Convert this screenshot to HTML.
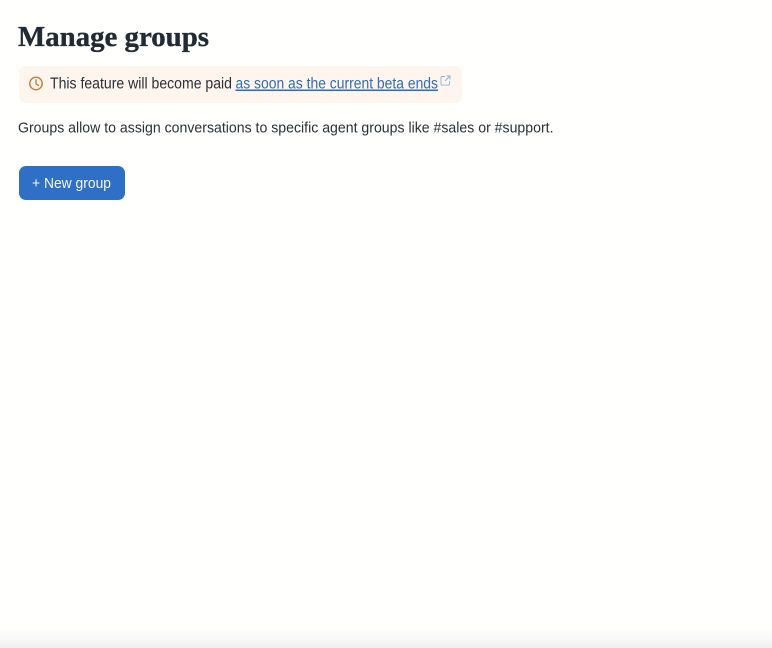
<!DOCTYPE html>
<html lang="en">
<head>
<meta charset="utf-8">
<title>Manage groups</title>
<style>
html,body{margin:0;padding:0;width:772px;height:648px;overflow:hidden;background:#fffffd}
body{position:relative;font-family:"Liberation Sans",sans-serif}
.bottom{position:absolute;left:0;top:628px;width:772px;height:20px;background:linear-gradient(to bottom,rgba(240,240,243,0) 0%,rgba(245,245,248,.6) 45%,#efefef 100%)}
.notice{position:absolute;left:18.5px;top:66px;width:443.5px;height:37px;background:#fdf5ee;border-radius:7px}
.btn{position:absolute;left:18.5px;top:165.5px;width:106.5px;height:34px;background:#2f6fc6;border-radius:7px;filter:blur(.3px)}
svg{position:absolute;left:0;top:0;filter:blur(.25px)}
text{font-family:"Liberation Sans",sans-serif}
</style>
</head>
<body>
<div class="bottom"></div>
<div class="notice"></div>
<div class="btn"></div>
<svg width="772" height="648" viewBox="0 0 772 648" xmlns="http://www.w3.org/2000/svg">
  <text x="18" y="46" textLength="191" lengthAdjust="spacingAndGlyphs" style="font-family:'Liberation Serif',serif;font-weight:700;font-size:29px" fill="#222a33" stroke="#222a33" stroke-width=".35">Manage groups</text>

  <circle cx="36" cy="83.5" r="6.2" fill="none" stroke="#c9813f" stroke-width="1.5"/>
  <path d="M36 79.8v4.1l2.4 1.5" fill="none" stroke="#c9813f" stroke-width="1.4" stroke-linecap="round" stroke-linejoin="round"/>

  <text x="50" y="88.5" textLength="182" lengthAdjust="spacingAndGlyphs" font-size="15.3" fill="#2a3038">This feature will become paid</text>
  <text x="235.5" y="88.5" textLength="202.5" lengthAdjust="spacingAndGlyphs" font-size="15.3" fill="#2f6db8" text-decoration="underline">as soon as the current beta ends</text>

  <path d="M445 76.5h-3.2a.8.8 0 0 0-.8.8v7a.8.8 0 0 0 .8.8h7a.8.8 0 0 0 .8-.8V81M446.5 76h3.5v3.5M450 76l-5 5" fill="none" stroke="#8fb3dc" stroke-width=".9"/>

  <text x="18" y="132.5" textLength="535.5" lengthAdjust="spacingAndGlyphs" font-size="14.8" fill="#2a3038">Groups allow to assign conversations to specific agent groups like #sales or #support.</text>

  <text x="32" y="188" textLength="79" lengthAdjust="spacingAndGlyphs" font-size="14.8" fill="#f4f8fd">+ New group</text>
</svg>
</body>
</html>
